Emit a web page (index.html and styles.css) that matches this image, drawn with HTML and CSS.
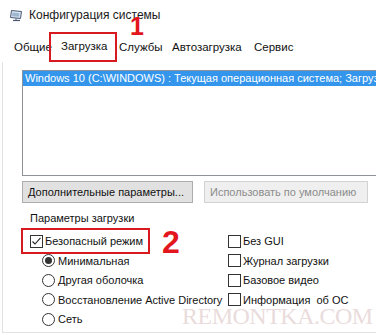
FILE: index.html
```html
<!DOCTYPE html>
<html lang="ru">
<head>
<meta charset="utf-8">
<title>Конфигурация системы</title>
<link rel="stylesheet" href="styles.css">
</head>
<body>
<div class="titlebar">
  <svg class="app-icon" width="14" height="13" viewBox="0 0 14 13">
    <path d="M2.5 1.5 L12.5 2.5 L11.5 9.5 L1.5 8.5 Z" fill="#d8e6f3" stroke="#4b5873"/>
    <path d="M3.5 3.5 L10.5 4.2 L10 7.8 L3 7.2 Z" fill="#9fb6cf"/>
    <path d="M4 11.5 H11" stroke="#4b5873" stroke-width="1.2"/>
    <path d="M7 9.5 V11" stroke="#4b5873"/>
  </svg>
  <span class="title">Конфигурация системы</span>
</div>
<div class="tabs">
  <span class="tab tab-general">Общие</span>
  <span class="tab tab-boot active">Загрузка</span>
  <span class="tab tab-services">Службы</span>
  <span class="tab tab-startup">Автозагрузка</span>
  <span class="tab tab-tools">Сервис</span>
</div>
<div class="page">
  <div class="listbox">
    <div class="item selected">Windows 10 (C:\WINDOWS) : Текущая операционная система; Загрузка</div>
  </div>
  <div class="buttons">
    <button class="btn btn-advanced">Дополнительные параметры...</button>
    <button class="btn btn-default disabled">Использовать по умолчанию</button>
  </div>
  <div class="group-label">Параметры загрузки</div>
  <div class="options">
    <div class="opt safe-mode"><span class="check checked"><svg width="11" height="11" viewBox="0 0 11 11"><path d="M1.5 5.5 L4 8 L9.5 1.8" fill="none" stroke="#222" stroke-width="1.1"/></svg></span><span class="opt-text">Безопасный режим</span></div>
    <div class="opt right"><span class="check"></span><span class="opt-text">Без GUI</span></div>
    <div class="opt radio-row"><span class="radio on"></span><span class="opt-text">Минимальная</span></div>
    <div class="opt right"><span class="check"></span><span class="opt-text">Журнал загрузки</span></div>
    <div class="opt radio-row"><span class="radio"></span><span class="opt-text">Другая оболочка</span></div>
    <div class="opt right"><span class="check"></span><span class="opt-text">Базовое видео</span></div>
    <div class="opt radio-row"><span class="radio"></span><span class="opt-text">Восстановление Active Directory</span></div>
    <div class="opt right"><span class="check"></span><span class="opt-text">Информация&nbsp; об ОС</span></div>
    <div class="opt radio-row"><span class="radio"></span><span class="opt-text">Сеть</span></div>
  </div>
</div>
<span class="mark mark-1">1</span>
<span class="mark mark-2">2</span>
<div class="watermark">REMONTKA.COM</div>
</body>
</html>
```
FILE: styles.css
```css
html, body {
  margin: 0;
  padding: 0;
  width: 376px;
  height: 335px;
  overflow: hidden;
  background: #ffffff;
}
body {
  position: relative;
  font-family: "Liberation Sans", Arial, sans-serif;
  font-size: 11px;
  color: #111;
}
.titlebar {
  height: 30px;
  display: flex;
  align-items: center;
  padding-left: 9px;
  gap: 6px;
}
.app-icon { display: block; }
.title {
  font-size: 12px;
  color: #1a1a1a;
}
.tabs {
  margin-top: 2px;
  height: 30px;
  display: flex;
  align-items: center;
  padding-left: 14px;
  font-size: 11.5px;
}
.tab {
  display: flex;
  align-items: center;
  height: 30px;
  box-sizing: border-box;
  white-space: nowrap;
}
.tab-general { width: 35px; }
.tab-boot {
  width: 68px;
  padding-left: 10px;
  padding-bottom: 2px;
  border: 2px solid #d71920;
}
.tab-services { width: 53px; margin-left: 2px; }
.tab-startup { width: 82px; }
.tab-tools { width: 50px; }

.page {
  margin-left: 2px;
  height: 271px;
  box-sizing: border-box;
  border-left: 1px solid #e2e2e2;
  border-bottom: 1px solid #e2e2e2;
  padding-left: 19px;
  padding-top: 8px;
}
.listbox {
  width: 354px;
  height: 106px;
  box-sizing: border-box;
  border: 1px solid #8f9399;
  border-right: none;
  background: #fff;
  overflow: hidden;
}
.item {
  height: 15px;
  line-height: 15px;
  padding-left: 2px;
  white-space: nowrap;
  overflow: hidden;
}
.item.selected {
  background: #3396ec;
  color: #fff;
}
.buttons {
  margin-top: 5px;
  display: flex;
  gap: 11px;
}
.btn {
  height: 22px;
  box-sizing: border-box;
  margin: 0;
  padding: 0 0 0 5px;
  text-align: left;
  font-family: inherit;
  font-size: 11px;
  color: #111;
  background: #e1e1e1;
  border: 1px solid #adadad;
  border-radius: 0;
  white-space: nowrap;
}
.btn-advanced { width: 171px; }
.btn-default { width: 164px; }
.btn.disabled {
  background: #efefef;
  border-color: #d2d2d2;
  color: #8c8c8c;
}
.group-label {
  margin-top: 8px;
  line-height: 14px;
  padding-left: 8px;
}
.options {
  margin-top: 6px;
  margin-left: 2px;
  display: grid;
  grid-template-columns: 204px 1fr;
  grid-template-rows: 20px 19px 20px 19px 20px;
}
.opt {
  display: flex;
  align-items: center;
  white-space: nowrap;
}
.safe-mode {
  width: 123px;
  padding-left: 6px;
  box-sizing: border-box;
  outline: 2px solid #d71920;
  outline-offset: 1px;
}
.safe-mode .opt-text { margin-left: 2px; }
.right .opt-text { margin-left: 2px; }
.radio-row { padding-left: 18px; }
.radio-row .opt-text { margin-left: 3px; }
.check {
  width: 13px;
  height: 13px;
  box-sizing: border-box;
  border: 1px solid #333;
  background: #fff;
  display: flex;
  align-items: center;
  justify-content: center;
  flex: none;
}
.check svg { display: block; }
.radio {
  width: 13px;
  height: 13px;
  box-sizing: border-box;
  border: 1px solid #333;
  border-radius: 50%;
  background: #fff;
  display: flex;
  align-items: center;
  justify-content: center;
  flex: none;
}
.radio.on::after {
  content: "";
  width: 7px;
  height: 7px;
  border-radius: 50%;
  background: #333;
}
.mark {
  position: absolute;
  font-family: "Liberation Sans", Arial, sans-serif;
  font-weight: bold;
  color: #e3161d;
}
.mark-1 {
  left: 130px;
  top: 17px;
  font-size: 25px;
  line-height: 19px;
}
.mark-2 {
  left: 162px;
  top: 226px;
  font-size: 32px;
  line-height: 32px;
}
.watermark {
  position: absolute;
  left: 182px;
  top: 307px;
  font-family: "Liberation Serif", "Times New Roman", serif;
  font-size: 24px;
  line-height: 18px;
  letter-spacing: -0.5px;
  color: #eadcdc;
  white-space: nowrap;
}
```
